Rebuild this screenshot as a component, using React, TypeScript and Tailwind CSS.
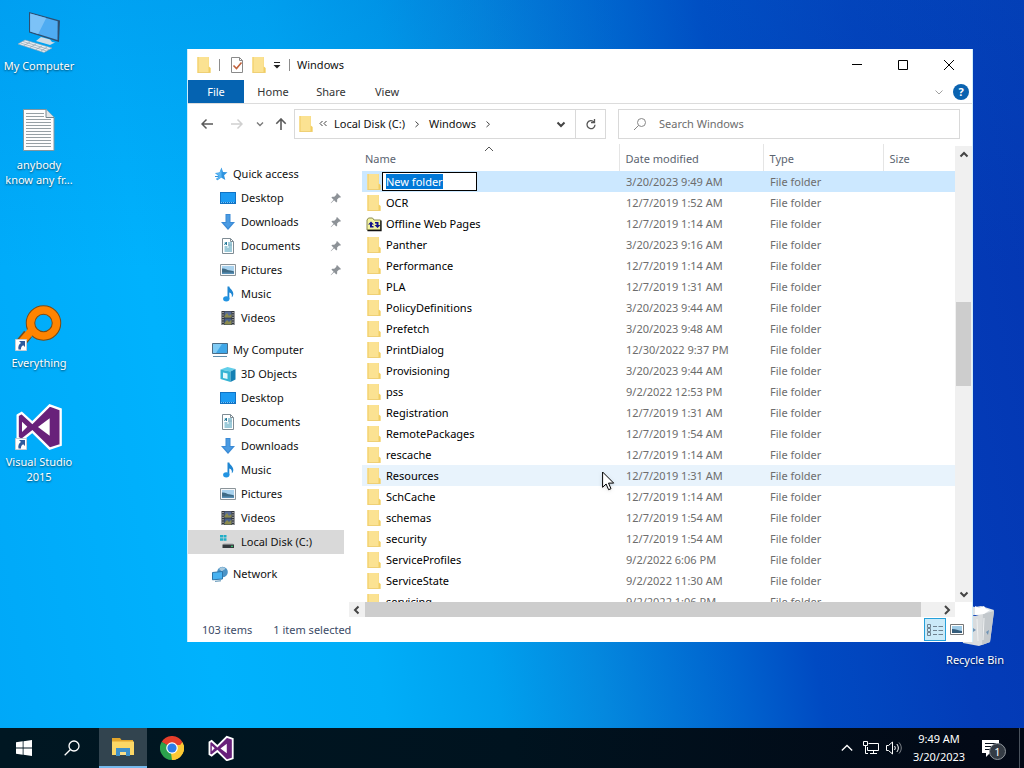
import { useEffect, useRef, type ReactNode } from 'react';

type IconName =
  | 'star'
  | 'desktop'
  | 'downloads'
  | 'documents'
  | 'pictures'
  | 'music'
  | 'videos'
  | 'computer'
  | 'objects'
  | 'disk'
  | 'network';

interface NavItem {
  label: string;
  icon: IconName;
  pinned?: boolean;
  selected?: boolean;
}

interface NavGroup {
  root: NavItem;
  items: NavItem[];
}

const NAV_GROUPS: NavGroup[] = [
  {
    root: { label: 'Quick access', icon: 'star' },
    items: [
      { label: 'Desktop', icon: 'desktop', pinned: true },
      { label: 'Downloads', icon: 'downloads', pinned: true },
      { label: 'Documents', icon: 'documents', pinned: true },
      { label: 'Pictures', icon: 'pictures', pinned: true },
      { label: 'Music', icon: 'music' },
      { label: 'Videos', icon: 'videos' },
    ],
  },
  {
    root: { label: 'My Computer', icon: 'computer' },
    items: [
      { label: '3D Objects', icon: 'objects' },
      { label: 'Desktop', icon: 'desktop' },
      { label: 'Documents', icon: 'documents' },
      { label: 'Downloads', icon: 'downloads' },
      { label: 'Music', icon: 'music' },
      { label: 'Pictures', icon: 'pictures' },
      { label: 'Videos', icon: 'videos' },
      { label: 'Local Disk (C:)', icon: 'disk', selected: true },
    ],
  },
  { root: { label: 'Network', icon: 'network' }, items: [] },
];

const FILES: { name: string; date: string }[] = [
  { name: 'New folder', date: '3/20/2023 9:49 AM' },
  { name: 'OCR', date: '12/7/2019 1:52 AM' },
  { name: 'Offline Web Pages', date: '12/7/2019 1:14 AM' },
  { name: 'Panther', date: '3/20/2023 9:16 AM' },
  { name: 'Performance', date: '12/7/2019 1:14 AM' },
  { name: 'PLA', date: '12/7/2019 1:31 AM' },
  { name: 'PolicyDefinitions', date: '3/20/2023 9:44 AM' },
  { name: 'Prefetch', date: '3/20/2023 9:48 AM' },
  { name: 'PrintDialog', date: '12/30/2022 9:37 PM' },
  { name: 'Provisioning', date: '3/20/2023 9:44 AM' },
  { name: 'pss', date: '9/2/2022 12:53 PM' },
  { name: 'Registration', date: '12/7/2019 1:31 AM' },
  { name: 'RemotePackages', date: '12/7/2019 1:54 AM' },
  { name: 'rescache', date: '12/7/2019 1:14 AM' },
  { name: 'Resources', date: '12/7/2019 1:31 AM' },
  { name: 'SchCache', date: '12/7/2019 1:14 AM' },
  { name: 'schemas', date: '12/7/2019 1:54 AM' },
  { name: 'security', date: '12/7/2019 1:54 AM' },
  { name: 'ServiceProfiles', date: '9/2/2022 6:06 PM' },
  { name: 'ServiceState', date: '9/2/2022 11:30 AM' },
  { name: 'servicing', date: '9/2/2022 1:06 PM' },
];

const RENAMING = 'New folder';
const HOVERED = 'Resources';

function FolderIcon() {
  return (
    <svg viewBox="0 0 16 18" className="w-4 h-[18px] shrink-0">
      <path d="M1.500 1H13v15.500H1.500z" fill="#f6db82" />
      <path d="M1.500 1h11v9l2 2v4.500h-13z" fill="#fbe292" />
      <path d="M1.500 1H3v15.500H1.500z" fill="#f5d67a" />
      <path d="M12.500 10.500 14.500 12v4.500h-2z" fill="#f1cd62" />
      <path d="M1.500 16h13v.8h-13z" fill="#edcb69" />
    </svg>
  );
}

function OfflineIcon() {
  return (
    <svg viewBox="0 0 16 16" className="w-4 h-4 shrink-0">
      <path d="M1 4 2.500 2h4L8 4h6.500v10H1z" fill="#f4f4a0" stroke="#8a8a50" />
      <path d="M15 4.500v10H1.500" fill="none" stroke="#111" strokeWidth="1.300" />
      <path d="m5 5.500-3 3h2v3h3.500V10H6V8.500h2zM11.500 12l3-3h-2V6H9v1.500h1.500V9h-2z" fill="#14148c" />
    </svg>
  );
}

function PinIcon() {
  return (
    <svg viewBox="0 0 12 12" className="w-3 h-3 shrink-0">
      <path d="m7 1 4 4-1 .7-.9-.2-2 2 .1 2-.9.9-2.200-2.200L1 11.200l-.3-.3 2.900-3.200-2.200-2.100.9-.9 2 .1 2.100-2L6.300 2z" fill="#8d9297" />
    </svg>
  );
}

function NavIcon({ name }: { name: IconName }) {
  const shapes: Record<IconName, ReactNode> = {
    star: (
      <>
        <path d="M9.500 1.500 11 6l4.500.3-3.400 3 1.200 4.700-4.200-2.400L5 14.500l1.200-4.700L3 7l4.500-.6z" fill="#2e93df" />
        <path d="M9.500 2v9.500L5.500 14l1.200-4.200L3.500 7.200l4.200-.5z" fill="#5ab5f2" />
        <path d="M3 10.500h3M4 13h2" stroke="#2e93df" />
      </>
    ),
    desktop: (
      <>
        <path d="M0 2h16v12H0z" fill="#1173c4" />
        <path d="M1 3h14v9H1z" fill="#1c9bf3" />
        <path d="M1 12.500h14" stroke="#75c4fa" strokeDasharray="1 1" />
      </>
    ),
    downloads: (
      <>
        <path d="M5.500 0h5v8H15l-7 8-7-8h4.500z" fill="#3a8ad6" />
        <path d="M6.500 1h3v8h3L8 14 3.500 9h3z" fill="#4b9be2" />
      </>
    ),
    documents: (
      <>
        <path d="M2.500.5h8l3 3v12h-11z" fill="#fff" stroke="#7f8c94" />
        <path d="M10.500.5v3h3" fill="none" stroke="#7f8c94" />
        <path d="M4.500 5h2M8 5h4M4.500 9h3M8.500 9H12M4.500 11h7.500M4.500 13h7.500" stroke="#3a96b4" />
        <path d="m4.500 7 2-3v3M8 7h4" fill="none" stroke="#287a9a" />
      </>
    ),
    pictures: (
      <>
        <path d="M.5 2.500h15v11H.5z" fill="#f6f8fa" stroke="#8b9499" />
        <path d="M2 4h12v8H2z" fill="#a8d2ee" />
        <path d="M2 6.500c3-.5 5 1.500 7 1.800 2 .2 3.500.7 5 1.200V12H2z" fill="#3f6b86" />
        <path d="M2 10.500h12V12H2z" fill="#568fb5" />
      </>
    ),
    music: (
      <>
        <path d="M7.500.5h1.800c.5 2.700 4.200 3.800 4 7.500 0 1.500-.7 2.500-1.500 3.300.5-3-.6-4.300-2.500-4.800v6.300h-1.800z" fill="#1f86d2" />
        <ellipse cx="6.300" cy="12.800" rx="3.200" ry="2.600" fill="#2294e2" />
      </>
    ),
    videos: (
      <>
        <path d="M1.500 1h13v14h-13z" fill="#30343a" />
        <path d="M4.500 1.500h7v6h-7z" fill="#586c95" />
        <path d="M4.500 8.500h7v6h-7z" fill="#47608f" />
        <path d="m4.500 6 2.500-3 2 3 2.500-2v3.500h-7zM4.500 13 7 10l2 2 2.500-2.500v5h-7z" fill="#8c8b4d" />
        <path d="M3 2v13M13 2v13" stroke="#eef0f2" strokeDasharray="1.200 1.200" />
      </>
    ),
    computer: (
      <>
        <path d="M.5 1.500h15v10H.5z" fill="#3fa7e8" stroke="#4b6c86" />
        <path d="M1 2h9L4 11H1z" fill="#7fcbf5" />
        <path d="M1 14.500h14" stroke="#5f8dab" />
      </>
    ),
    objects: (
      <>
        <path d="m.5 3.500 7-2.500 8 2-5 2.500z" fill="#62cfea" />
        <path d="m.5 3.500 10 2V16l-10-3z" fill="#35b4d4" />
        <path d="m10.500 5.500 5-2.500v10.500l-5 2.500z" fill="#1581b4" />
        <path d="m3 6.500 4.500 1v5.500L3 12z" fill="#e2f9fc" />
      </>
    ),
    disk: (
      <>
        <path d="M0 1h3v2.500H0zM3.500 1h3v2.500h-3zM0 4.200h3v2.500H0zM3.500 4.200h3v2.500h-3z" fill="#20aec7" />
        <path d="M3.500 9.500h9l1.500 1H3z" fill="#a5a9ad" />
        <path d="M2.500 10.500H14V14H2.500z" fill="#35393d" />
        <path d="M11 12.300h2" stroke="#3be27a" />
      </>
    ),
    network: (
      <>
        <circle cx="10.500" cy="6" r="5.300" fill="#4b93c6" />
        <path d="M7 3c1.500-2 4.500-2.200 6.500-.5-1 1.800-3 1.500-3.500 3z" fill="#a8c9dd" />
        <path d="m.5 6.500 10-1v7.500l-10 .8z" fill="#49b3f1" stroke="#2d75a9" />
        <path d="m3 15.300 6-.5" stroke="#4d88ae" />
      </>
    ),
  };

  return (
    <svg viewBox="0 0 16 16" className="w-4 h-4 shrink-0">
      {shapes[name]}
    </svg>
  );
}

function Chevron({ d, className }: { d: string; className: string }) {
  return (
    <svg viewBox="0 0 10 10" className={`w-2.5 h-2.5 shrink-0 ${className}`} fill="none" stroke="currentColor">
      <path d={d} />
    </svg>
  );
}

const UP = 'm1 7 4-4 4 4';
const DOWN = 'm1 3 4 4 4-4';
const LEFT = 'M7 1 3 5l4 4';
const RIGHT = 'm3 1 4 4-4 4';
const SMALL_UP = 'm1.500 6.500 3.500-3.500 3.500 3.500';
const SMALL_DOWN = 'm1.500 3.500 3.500 3.500 3.500-3.500';
const SMALL_LEFT = 'M6.500 1.500 3 5l3.500 3.500';
const SMALL_RIGHT = 'm3.500 2.500 3 2.800-3 2.700';

function VisualStudioIcon({ className, strokeWidth }: { className: string; strokeWidth: number }) {
  return (
    <svg viewBox="46 336 144 144" className={className}>
      <path
        d="M54 376 66 369 98 398 150 346 183 358V465L150 476 98 425 66 450 54 443Z"
        fill="#68217a"
        stroke="#fff"
        strokeWidth={strokeWidth}
      />
      <path d="M67 395 83 410 67 426ZM115 411 150 385V437Z" fill="#fff" />
    </svg>
  );
}

function ShortcutArrow() {
  return (
    <svg viewBox="0 0 12 12" className="absolute left-[15px] bottom-0 w-3 h-3">
      <path d="M.5.5h11v11H.5z" fill="#fff" stroke="#c5ccd4" />
      <path d="M4 2h6v6L8.200 6.200C6.500 7 5.800 8.500 6 10.500H3.500C2.800 7.500 4 5.200 6 4z" fill="#2f5a9c" />
    </svg>
  );
}

function DesktopItem({ label, className, children }: { label: string; className: string; children: ReactNode }) {
  return (
    <button className={`absolute flex flex-col items-center w-[78px] text-white leading-[15px] ${className}`}>
      {children}
      <span className="whitespace-pre [text-shadow:0_1px_2px_rgba(0,0,0,0.6)]">{label}</span>
    </button>
  );
}

function DesktopIcons() {
  return (
    <>
      <DesktopItem label="My Computer" className="left-0 top-[10px]">
        <svg viewBox="0 0 48 48" className="w-12 h-12">
          <path d="m14 2 31 8.500L44 32l-30-9.500z" fill="#2d4f72" />
          <path d="m15.200 3.600 27.500 7.700-.2 18.700-27.300-8.600z" fill="#4facf2" />
          <path d="m15.200 3.600 16 4.500-8 15.800-8-2.500z" fill="#7cc2f7" />
          <path d="m26 27 9 2.500 2 2.500 3 .5-5 2.500-14-4z" fill="#cfdce5" />
          <path d="m10 30 27 8-8 4.500L3 34z" fill="#e9eef2" stroke="#90a5b5" strokeWidth=".6" />
          <path d="m8 31.500 26 8M5.500 33l26 8M15 32l-6 3.500M21 34l-6 3.500M27 36l-6 3.500M32 37l-6 4" stroke="#8fa3b2" strokeWidth=".7" />
        </svg>
      </DesktopItem>

      <DesktopItem label={'anybody\nknow any fr...'} className="left-0 top-[105px]">
        <svg viewBox="0 0 48 52" className="w-12 h-[52px]">
          <path d="M8.500 4.500H31l8 8v33H8.500z" fill="#fdfdfd" stroke="#84969f" />
          <path d="M31 4.500v8h8" fill="#e2e6e8" stroke="#76858d" />
          <path d="M11 8.500h18M11 11.500h18M11 14.500h25M11 17.500h25M11 20.500h25M11 23.500h25M11 26.500h25M11 29.500h25M11 32.500h25M11 35.500h25M11 38.500h25M11 41.500h25" stroke="#969fa4" />
        </svg>
      </DesktopItem>

      <DesktopItem label="Everything" className="left-0 top-[303px]">
        <span className="relative flex w-[78px] h-12 mb-1 justify-center">
          <svg viewBox="0 0 48 48" className="w-12 h-12">
            <path d="m4 42 9-11" stroke="#7a4b15" strokeWidth="10" />
            <circle cx="28.500" cy="20" r="13" fill="none" stroke="#7a4b15" strokeWidth="9.500" />
            <path d="m4 42 13-15" stroke="#ff8400" strokeWidth="7.500" />
            <circle cx="28.500" cy="20" r="13" fill="none" stroke="#ff8400" strokeWidth="7.500" />
          </svg>
          <ShortcutArrow />
        </span>
      </DesktopItem>

      <DesktopItem label={'Visual Studio\n2015'} className="left-0 top-[402px]">
        <span className="relative flex w-[78px] h-12 mb-1 justify-center">
          <VisualStudioIcon className="w-12 h-12" strokeWidth={7} />
          <ShortcutArrow />
        </span>
      </DesktopItem>

      <DesktopItem label="Recycle Bin" className="right-[10px] top-[600px]">
        <svg viewBox="0 0 48 52" className="w-12 h-[52px]">
          <path d="M6 11 14 5l10 2 6-1 13 4-2 5H9z" fill="#dde2e6" />
          <path d="m6 12 18 4 19-5-4 31-11 4-16-3z" fill="#d9dcde" />
          <path d="m32 14 11-3-4 31-8 3z" fill="#c3c8cc" />
          <path d="m24 6 4 2 5-2 2 3 4 1-6 4-9 1z" fill="#fff" />
          <path d="m35 32 3-2-1 5zM22 28l3 2-3 2z" fill="#6f93b4" />
          <path d="m26 19 1 22M33 18l-1 22" stroke="#eef0f1" />
        </svg>
      </DesktopItem>
    </>
  );
}

function TitleBar() {
  return (
    <div className="flex items-center h-[31px] shrink-0 pl-2">
      <FolderIcon />
      <span className="w-px h-3 ml-[7px] bg-[#8c8c8c]" />
      <button aria-label="Properties" className="ml-[9px]">
        <svg viewBox="0 0 16 18" className="w-4 h-[18px]">
          <path d="M2.500 1.500h8l3 3v12h-11z" fill="#fff" stroke="#8a8a8a" />
          <path d="M10.500 1.500v3h3" fill="none" stroke="#8a8a8a" />
          <path d="m4.500 9.500 3 3 5-6" fill="none" stroke="#c1623c" strokeWidth="1.600" />
        </svg>
      </button>
      <button aria-label="New folder" className="ml-[6px]">
        <FolderIcon />
      </button>
      <button aria-label="Customize Quick Access Toolbar" className="ml-[6px]">
        <svg viewBox="0 0 8 8" className="w-2 h-2">
          <path d="M1 1.500h6" stroke="#222" />
          <path d="M.5 4h7L4 7.500z" fill="#222" />
        </svg>
      </button>
      <span className="w-px h-3 ml-2 bg-[#8c8c8c]" />
      <span className="flex-1 ml-[7px]">Windows</span>
      <button aria-label="Minimize" className="flex justify-center w-[46px]">
        <svg viewBox="0 0 10 10" className="w-2.5 h-2.5" stroke="#000">
          <path d="M0 4.500h10" />
        </svg>
      </button>
      <button aria-label="Maximize" className="flex justify-center w-[46px]">
        <svg viewBox="0 0 10 10" className="w-2.5 h-2.5" fill="none" stroke="#000">
          <path d="M.5.5h9v9h-9z" />
        </svg>
      </button>
      <button aria-label="Close" className="flex justify-center w-[46px]">
        <svg viewBox="0 0 10 10" className="w-2.5 h-2.5" stroke="#000">
          <path d="m0 0 10 10M10 0 0 10" />
        </svg>
      </button>
    </div>
  );
}

function Ribbon() {
  return (
    <div className="flex items-stretch h-6 shrink-0 border-b border-[#dcdcdc] text-[#333]">
      <button className="w-14 bg-[#0563b1] text-white">File</button>
      <button className="w-[58px]">Home</button>
      <button className="w-[58px]">Share</button>
      <button className="w-[54px]">View</button>
      <div className="flex items-center ml-auto gap-[9px] pr-[3px]">
        <button aria-label="Expand the Ribbon">
          <Chevron d={SMALL_DOWN} className="text-[#a0a0a0]" />
        </button>
        <button
          aria-label="Help"
          className="w-4 h-4 rounded-full bg-[#0b63b0] text-white font-bold leading-4 text-center"
        >
          ?
        </button>
      </div>
    </div>
  );
}

function AddressBar() {
  return (
    <div className="flex items-center shrink-0 h-10 pl-[13px] pr-3">
      <button aria-label="Back">
        <svg viewBox="0 0 12 12" className="w-3 h-3" fill="none" stroke="#5a5a5a" strokeWidth="1.500">
          <path d="M12 6H1M5.500 1.500 1 6l4.500 4.500" />
        </svg>
      </button>
      <button aria-label="Forward" className="ml-[18px]">
        <svg viewBox="0 0 12 12" className="w-3 h-3" fill="none" stroke="#d0d0d0" strokeWidth="1.500">
          <path d="M0 6h11M6.500 1.500 11 6l-4.500 4.500" />
        </svg>
      </button>
      <button aria-label="Recent locations" className="ml-[13px]">
        <svg viewBox="0 0 8 8" className="w-2 h-2" fill="none" stroke="#7a7a7a" strokeWidth="1.400">
          <path d="m1 2.500 3 3 3-3" />
        </svg>
      </button>
      <button aria-label="Up" className="ml-[11px]">
        <svg viewBox="0 0 12 12" className="w-3 h-3" fill="none" stroke="#5a5a5a" strokeWidth="1.600">
          <path d="M6 12V1M1.300 5.700 6 1l4.700 4.700" />
        </svg>
      </button>

      <div className="flex items-center w-[312px] h-[30px] ml-[7px] pl-[3px] border border-[#d9d9d9]">
        <FolderIcon />
        <svg viewBox="0 0 10 10" className="w-2.5 h-2.5 ml-1" fill="none" stroke="#444">
          <path d="M4.500 2 2 4.500 4.500 7M8.500 2 6 4.500 8.500 7" />
        </svg>
        <button className="ml-[6px]">Local Disk (C:)</button>
        <Chevron d={SMALL_RIGHT} className="text-[#444] ml-[7px]" />
        <button className="ml-[7px]">Windows</button>
        <Chevron d={SMALL_RIGHT} className="text-[#444] ml-[7px]" />
        <button aria-label="Previous locations" className="ml-auto mr-[9px]">
          <Chevron d={SMALL_DOWN} className="text-[#444] stroke-2" />
        </button>
        <button
          aria-label="Refresh"
          className="flex items-center justify-center w-[30px] h-full border-l border-[#d9d9d9]"
        >
          <svg viewBox="0 0 12 12" className="w-3 h-3" fill="none" stroke="#555" strokeWidth="1.300">
            <path d="M9 4A4 4 0 1 0 10 6.800" />
            <path d="M9.500 1v3.500H6" />
          </svg>
        </button>
      </div>

      <label className="flex items-center flex-1 h-[30px] ml-3 pl-[14px] border border-[#d9d9d9]">
        <svg viewBox="0 0 14 14" className="w-3.5 h-3.5 shrink-0" fill="none" stroke="#868686">
          <circle cx="8.500" cy="5.500" r="4" />
          <path d="M5.500 8.500 1 13" />
        </svg>
        <input
          type="text"
          aria-label="Search Windows"
          placeholder="Search Windows"
          className="flex-1 min-w-0 ml-3 outline-none placeholder:text-[#6d6d6d] placeholder:opacity-100"
        />
      </label>
    </div>
  );
}

function NavRow({ item, child }: { item: NavItem; child?: boolean }) {
  return (
    <a
      href="#"
      className={`flex items-center w-[156px] h-6 pr-[2px] gap-[5px] ${child ? 'pl-8' : 'pl-6'} ${
        item.selected ? 'bg-[#d9d9d9]' : ''
      }`}
    >
      <NavIcon name={item.icon} />
      <span className="flex-1">{item.label}</span>
      {item.pinned && <PinIcon />}
    </a>
  );
}

function Sidebar() {
  return (
    <nav className="flex flex-col gap-2 w-[161px] shrink-0 pt-[18px]">
      {NAV_GROUPS.map((group) => (
        <div key={group.root.label}>
          <NavRow item={group.root} />
          {group.items.map((item) => (
            <NavRow key={item.label} item={item} child />
          ))}
        </div>
      ))}
    </nav>
  );
}

function FileTable() {
  const renameRef = useRef<HTMLInputElement>(null);

  // Start with the new folder's name ready to be typed over
  useEffect(() => {
    renameRef.current?.focus();
    renameRef.current?.select();
  }, []);

  return (
    <table className="w-full table-fixed border-collapse text-left text-[#6d6d6d]">
      <colgroup>
        <col className="w-[257px]" />
        <col className="w-36" />
        <col className="w-[120px]" />
        <col />
      </colgroup>
      <thead>
        <tr className="h-[27px] text-[#5b6470]">
          <th className="relative pl-[3px] pt-[3px] font-normal border-r border-[#e5e5e5]">
            Name
            <Chevron d={UP} className="absolute left-[122px] top-0 text-[#555]" />
          </th>
          <th className="pl-[6px] pt-[3px] font-normal border-r border-[#e5e5e5]">Date modified</th>
          <th className="pl-[6px] pt-[3px] font-normal border-r border-[#e5e5e5]">Type</th>
          <th className="pl-[6px] pt-[3px] font-normal">Size</th>
        </tr>
      </thead>
      <tbody>
        {FILES.map((file) => (
          <tr
            key={file.name}
            className={`h-[21px] ${
              file.name === RENAMING ? 'bg-[#cce8ff]' : file.name === HOVERED ? 'bg-[#e8f3fc]' : ''
            }`}
          >
            <td className="p-0">
              <div className="flex items-center h-[21px] pl-1 text-black">
                {file.name === 'Offline Web Pages' ? <OfflineIcon /> : <FolderIcon />}
                {file.name === RENAMING ? (
                  <input
                    ref={renameRef}
                    type="text"
                    aria-label="Folder name"
                    defaultValue={file.name}
                    className="w-[95px] h-[19px] pl-[3px] bg-white border border-black outline-none selection:bg-[#0078d7] selection:text-white"
                  />
                ) : (
                  <span className="ml-1">{file.name}</span>
                )}
              </div>
            </td>
            <td className="p-0 pl-[7px]">{file.date}</td>
            <td className="p-0 pl-[7px]">File folder</td>
            <td className="p-0" />
          </tr>
        ))}
      </tbody>
    </table>
  );
}

function FilePane() {
  return (
    <div className="flex flex-1 min-w-0">
      <div className="flex flex-col flex-1 min-w-0">
        <div className="flex-1 min-h-0 overflow-hidden pl-[13px]">
          <FileTable />
        </div>
        <div className="flex items-center h-[15px] shrink-0 bg-[#f0f0f0]">
          <button aria-label="Scroll left" className="flex justify-center w-4">
            <Chevron d={SMALL_LEFT} className="text-[#444] stroke-2" />
          </button>
          <div className="flex-1 h-full mr-[17px] bg-[#cdcdcd]" />
          <button aria-label="Scroll right" className="flex justify-center w-[17px]">
            <Chevron d={RIGHT} className="text-[#444] stroke-2" />
          </button>
        </div>
      </div>
      <div className="flex flex-col items-center w-[17px] shrink-0 mt-[2px] mb-[15px] bg-[#f0f0f0]">
        <button aria-label="Scroll up" className="flex items-center h-[17px]">
          <Chevron d={SMALL_UP} className="text-[#444] stroke-2" />
        </button>
        <div className="w-[15px] h-[84px] mt-[139px] bg-[#cdcdcd]" />
        <button aria-label="Scroll down" className="flex items-center h-[17px] mt-auto">
          <Chevron d={SMALL_DOWN} className="text-[#444] stroke-2" />
        </button>
      </div>
    </div>
  );
}

function StatusBar() {
  return (
    <div className="flex items-center h-[25px] shrink-0 pl-[14px] pr-2 text-[#3b4a66]">
      <span>103 items</span>
      <span className="ml-[21px]">1 item selected</span>
      <button
        aria-label="Details view"
        className="flex items-center justify-center w-[22px] h-[23px] ml-auto border border-[#26a0da] bg-[#cbeaf8]"
      >
        <svg viewBox="0 0 16 14" className="w-4 h-3.5" fill="none" stroke="#6f8290">
          <path d="M.5 1.500h3v3h-3zM.5 5.500h3v3h-3zM.5 9.500h3v3h-3zM6 3.500h4M11.500 3.500H16M6 7.500h4M11.500 7.500H16M6 11.500h4M11.500 11.500H16" />
        </svg>
      </button>
      <button aria-label="Large icons view" className="ml-1">
        <svg viewBox="0 0 14 12" className="w-3.5 h-3">
          <path d="M.5.5h13v10H.5z" fill="#fff" stroke="#777" />
          <path d="M2 2h10v7H2z" fill="#9fcbe6" />
          <path d="M2 5c4 0 6 1.500 10 2v2H2z" fill="#355d7c" />
        </svg>
      </button>
    </div>
  );
}

function ExplorerWindow() {
  return (
    <section className="absolute left-[187px] right-[51px] top-[49px] flex flex-col h-[593px] bg-white border-x border-[#cfeefb] text-[#111]">
      <TitleBar />
      <Ribbon />
      <AddressBar />
      <div className="flex flex-1 min-h-0">
        <Sidebar />
        <FilePane />
      </div>
      <StatusBar />
    </section>
  );
}

function Taskbar() {
  return (
    <footer className="flex items-center h-10 shrink-0 bg-linear-to-r from-[#001722] via-[#00131f] to-[#020815] text-white">
      <button aria-label="Start" className="flex justify-center w-12">
        <svg viewBox="0 0 16 16" className="w-4 h-4" fill="#fff">
          <path d="M0 2.200 6.700 1.300v6.300H0zM7.500 1.200 16 0v7.600H7.500zM0 8.400h6.700v6.300L0 13.800zM7.500 8.400H16V16l-8.500-1.200z" />
        </svg>
      </button>
      <button aria-label="Search" className="flex justify-center w-[51px] pr-[3px]">
        <svg viewBox="0 0 16 16" className="w-4 h-4" fill="none" stroke="#fff" strokeWidth="1.300">
          <circle cx="10" cy="6" r="5" />
          <path d="M6.500 9.500.7 15.300" />
        </svg>
      </button>
      <button
        aria-label="File Explorer"
        className="flex items-center justify-center w-12 h-10 bg-[#32444f] border-b-2 border-[#76b9ed]"
      >
        <svg viewBox="0 0 22 18" className="w-[22px] h-[18px]">
          <path d="M0 0h8l1.500 2H21v6H0z" fill="#e3a62c" />
          <path d="M0 3.500h22V17H0z" fill="#fbd766" />
          <path d="M4 10h14v8h-4v-4H8v4H4z" fill="#3f90c9" />
          <path d="M8 14h6v3H8z" fill="#fbe08a" />
        </svg>
      </button>
      <button aria-label="Google Chrome" className="flex justify-center w-[50px]">
        <svg viewBox="0 0 24 24" className="w-6 h-6">
          <path d="M12 12 1.600 6A12 12 0 0 1 22.400 6Z" fill="#e43e2b" />
          <path d="M12 12V24A12 12 0 0 1 1.600 6Z" fill="#2ba24c" />
          <path d="M12 12 22.400 6A12 12 0 0 1 12 24Z" fill="#fcc934" />
          <path d="M12 6h10.400L18 12h-6z" fill="#e43e2b" />
          <path d="M1.600 6 6.800 15 12 12z" fill="#2ba24c" />
          <path d="m17.200 15-5.200 9-1-7z" fill="#fcc934" />
          <path d="M17 9h6.600A12 12 0 0 1 12 24l5.200-9z" fill="#fcc934" />
          <circle cx="12" cy="12" r="5.800" fill="#fff" />
          <circle cx="12" cy="12" r="4.600" fill="#2c7de9" />
        </svg>
      </button>
      <button aria-label="Visual Studio 2015" className="flex justify-center w-12">
        <VisualStudioIcon className="w-[26px] h-[26px]" strokeWidth={10} />
      </button>

      <div className="flex items-center ml-auto">
        <button aria-label="Show hidden icons">
          <svg viewBox="0 0 12 12" className="w-3 h-3" fill="none" stroke="#fff" strokeWidth="1.300">
            <path d="m.8 8.500 5.200-5 5.200 5" />
          </svg>
        </button>
        <button aria-label="Network" className="ml-[10px]">
          <svg viewBox="0 0 16 14" className="w-4 h-3.5" fill="none" stroke="#fff">
            <path d="M5.500 2.500h10v7h-11V6M7 12.500h7M10.500 9.500v3M.5.5h4v4h-4zM2.500 4.500v8H5" />
          </svg>
        </button>
        <button aria-label="Volume" className="ml-[7px]">
          <svg viewBox="0 0 16 14" className="w-4 h-3.5" fill="none" stroke="#fff">
            <path d="M.5 4.500h2L6.500 1v12l-4-3.500h-2zM8.500 5c1 1.300 1 2.700 0 4M10.800 3c2 2.500 2 5.500 0 8" />
            <path d="M13 1.500c3 3.500 3 7.500 0 11" opacity=".5" />
          </svg>
        </button>
        <button className="w-[70px] ml-[2px] leading-[18px] text-center">
          9:49 AM
          <br />
          3/20/2023
        </button>
        <button aria-label="1 new notification" className="relative w-[34px] h-6 ml-2 mr-[3px]">
          <svg viewBox="0 0 17 17" className="w-[17px] h-[17px]">
            <path d="M0 0h17v13H8l-4 4v-4H0z" fill="#fff" />
            <path d="M3 3.500h11M3 6.500h11M3 9.500h8" stroke="#06101c" strokeWidth="1.200" />
          </svg>
          <span className="absolute left-[7px] top-[7px] w-[17px] h-[17px] rounded-full border border-[#8f959b] bg-[#343b44] leading-[15px] text-center">
            1
          </span>
        </button>
        <button aria-label="Show desktop" className="w-[5px] h-10 border-l border-[#4a525d]" />
      </div>
    </footer>
  );
}

export default function App() {
  return (
    <div className="flex flex-col min-h-screen overflow-hidden font-['Noto_Sans','Open_Sans',sans-serif] text-[11px] leading-4 bg-[linear-gradient(180deg,rgba(0,100,200,0.2),rgba(0,100,200,0)_35%),linear-gradient(80deg,#00a8f8_0%,#00b2fd_20%,#00aef8_34%,#00a0ee_44%,#0488de_53%,#0062ce_65%,#004ac2_72%,#033cb8_85%,#0436b2_100%)]">
      <main className="relative flex-1">
        <DesktopIcons />
        <ExplorerWindow />
        <svg viewBox="0 0 13 20" className="absolute left-[602px] top-[471px] w-[13px] h-5 drop-shadow">
          <path d="M.6 1v15.300l3.500-3.300 2.500 5.700 2.400-1-2.500-5.600h5.200z" fill="#fff" stroke="#000" />
        </svg>
      </main>
      <Taskbar />
    </div>
  );
}
